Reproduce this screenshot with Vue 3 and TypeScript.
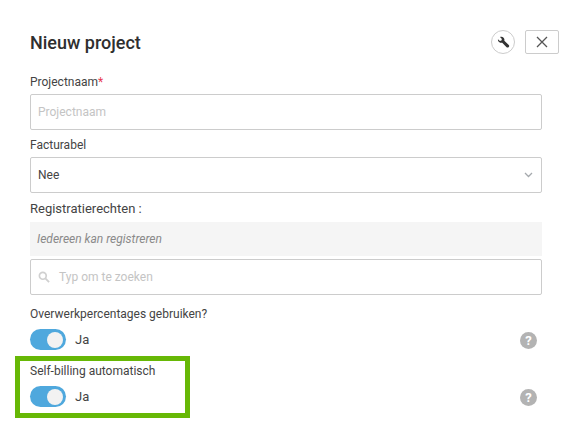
<script setup lang="ts">
const title: string = 'Nieuw project'
</script>

<template>
  <div class="dialog">
    <header class="head">
      <h1 class="title">{{ title }}</h1>
      <button class="tool" type="button" aria-label="Instellingen">
        <svg width="13" height="13" viewBox="0 0 16 16">
          <path fill="#333" d="M1.2 3.9 3.6 6l1.9-.5.5-1.9L3.7 1.3C5.2.6 7 .9 8.1 2c1 1 1.3 2.400.9 3.700l5.500 5.300c.7.700.7 1.700 0 2.400l-.3.300c-.7.700-1.700.7-2.400 0L6.400 8.200c-1.300.4-2.800.1-3.800-.9C1.400 6.300 1 5.300 1.200 3.900Z"/>
        </svg>
      </button>
      <button class="close" type="button" aria-label="Sluiten">
        <svg width="12" height="12" viewBox="0 0 12 12">
          <path d="M1 1l10 10M11 1 1 11" stroke="#555" stroke-width="1.300" fill="none"/>
        </svg>
      </button>
    </header>

    <form class="form">
      <div class="field">
        <label class="label">Projectnaam<span class="req">*</span></label>
        <div class="box"><span class="ph">Projectnaam</span></div>
      </div>

      <div class="field wide-gap">
        <label class="label">Facturabel</label>
        <div class="box select">
          <span class="value">Nee</span>
          <svg width="9" height="6" viewBox="0 0 9 6">
            <path d="M1 1l3.500 3.500L8 1" stroke="#a5a9ad" stroke-width="1.300" fill="none"/>
          </svg>
        </div>
      </div>

      <div class="field">
        <label class="label large">Registratierechten :</label>
        <div class="readonly">Iedereen kan registreren</div>
        <div class="box search">
          <svg width="12" height="12" viewBox="0 0 13 13">
            <circle cx="5.200" cy="5.200" r="3.700" stroke="#d0d0d0" stroke-width="1.800" fill="none"/>
            <path d="M8 8l4 4" stroke="#d0d0d0" stroke-width="2" fill="none"/>
          </svg>
          <span class="ph">Typ om te zoeken</span>
        </div>
      </div>

      <div class="toggle-field">
        <label class="label tall">Overwerkpercentages gebruiken?</label>
        <div class="toggle-row">
          <span class="switch"><span class="knob"></span></span>
          <span class="yes">Ja</span>
          <span class="help">?</span>
        </div>
      </div>

      <div class="toggle-field marked">
        <span class="mark"></span>
        <label class="label tall">Self-billing automatisch</label>
        <div class="toggle-row">
          <span class="switch"><span class="knob"></span></span>
          <span class="yes">Ja</span>
          <span class="help">?</span>
        </div>
      </div>
    </form>
  </div>
</template>

<style>
html, body { margin: 0; background: #fff; }
</style>

<style scoped>
.dialog {
  width: 575px;
  height: 433px;
  overflow: hidden;
  box-sizing: border-box;
  padding: 30px 16px 0 30px;
  font-family: Roboto, "Liberation Sans", sans-serif;
  color: #333;
  background: #fff;
}
.head {
  display: flex;
  align-items: center;
  height: 24px;
}
.title {
  flex: 1;
  margin: 2px 0 0;
  font-size: 18px;
  font-weight: 500;
  line-height: 26px;
  color: #2f2f2f;
}
.tool {
  width: 24px;
  height: 24px;
  box-sizing: border-box;
  margin-right: 10px;
  padding: 0;
  display: flex;
  align-items: center;
  justify-content: center;
  border: 1px solid #ccc;
  border-radius: 50%;
  background: #fff;
}
.close {
  width: 34px;
  height: 24px;
  box-sizing: border-box;
  padding: 0;
  display: flex;
  align-items: center;
  justify-content: center;
  border: 1px solid #ccc;
  border-radius: 2px;
  background: #fff;
}
.form {
  width: 512px;
  margin-top: 20px;
}
.field { margin-bottom: 7px; }
.field.wide-gap { margin-bottom: 8px; }
.label {
  display: block;
  height: 20px;
  font-size: 12px;
  line-height: 16px;
  color: #444;
}
.label.large { font-size: 13px; }
.label.tall { height: 24px; line-height: 18px; }
.req { color: #e8384f; }
.box {
  height: 36px;
  box-sizing: border-box;
  display: flex;
  align-items: center;
  padding: 0 7px;
  border: 1px solid #ccc;
  border-radius: 2px;
  font-size: 12px;
  background: #fff;
}
.ph { color: #c4c4c4; }
.value { color: #444; }
.select { justify-content: space-between; padding-right: 8px; }
.readonly {
  height: 34px;
  margin-top: 1px;
  padding-left: 7px;
  display: flex;
  align-items: center;
  font-size: 12px;
  font-style: italic;
  color: #8a8a8a;
  background: #f5f5f5;
}
.search { margin-top: 3px; gap: 9px; }
.toggle-field { margin-top: 10px; }
.toggle-field.marked { position: relative; margin-top: 12px; }
.toggle-row {
  display: flex;
  align-items: center;
  height: 21px;
  padding-right: 5px;
}
.switch {
  width: 36px;
  height: 21px;
  box-sizing: border-box;
  padding: 2.500px 3px;
  display: flex;
  justify-content: flex-end;
  border-radius: 11px;
  background: #4fa8dd;
}
.knob {
  width: 16px;
  height: 16px;
  border-radius: 50%;
  background: #f2f2f2;
}
.yes {
  flex: 1;
  margin-left: 9px;
  font-size: 13px;
  color: #444;
}
.help {
  width: 17px;
  height: 17px;
  margin-top: 2px;
  border-radius: 50%;
  background: #b3b3b3;
  color: #fff;
  font-size: 13px;
  font-weight: 700;
  line-height: 17px;
  text-align: center;
}
.mark {
  position: absolute;
  left: -15px;
  top: -6px;
  width: 175px;
  height: 62px;
  box-sizing: border-box;
  border: 5px solid #67b806;
  pointer-events: none;
}
</style>
